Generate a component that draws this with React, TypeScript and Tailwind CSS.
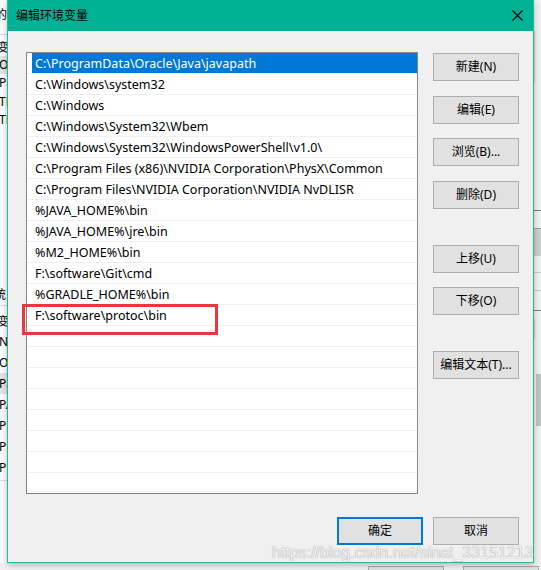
import clsx from "clsx";

const paths = [
  "C:\\ProgramData\\Oracle\\Java\\javapath",
  "C:\\Windows\\system32",
  "C:\\Windows",
  "C:\\Windows\\System32\\Wbem",
  "C:\\Windows\\System32\\WindowsPowerShell\\v1.0\\",
  "C:\\Program Files (x86)\\NVIDIA Corporation\\PhysX\\Common",
  "C:\\Program Files\\NVIDIA Corporation\\NVIDIA NvDLISR",
  "%JAVA_HOME%\\bin",
  "%JAVA_HOME%\\jre\\bin",
  "%M2_HOME%\\bin",
  "F:\\software\\Git\\cmd",
  "%GRADLE_HOME%\\bin",
  "F:\\software\\protoc\\bin",
];

const rows = [...paths, ...Array(8).fill("")];

function Btn({ label, className }: { label: string; className?: string }) {
  return (
    <div
      className={clsx(
        "flex h-[28px] w-[86px] items-center justify-center bg-[#e1e1e1] text-[12px] text-black",
        className ?? "border border-[#adadad]"
      )}
    >
      {label}
    </div>
  );
}

function BackStripLeft() {
  return (
    <div className="flex w-[7px] flex-col overflow-hidden bg-[#fbfbfb] text-[12px] leading-none whitespace-nowrap text-black">
      <div className="h-[35px] border-b border-[#d9d9d9] pt-[9px]">
        <span className="ml-[-5px] block">的</span>
      </div>
      <div className="mt-[5px] flex h-[16px] items-center">
        <span className="ml-[-3px]">变</span>
      </div>
      <div className="flex h-[18px] items-center bg-[#e3e3e3]">
        <span className="ml-[-1px]">OneDrive</span>
      </div>
      <div className="flex h-[18px] items-center"><span className="ml-[-1px]">Path</span></div>
      <div className="flex h-[19px] items-center"><span className="ml-[-1px]">TEMP</span></div>
      <div className="flex h-[18px] items-center"><span className="ml-[-1px]">TMP</span></div>
      <div className="h-[156px] shrink-0" />
      <div className="flex h-[21px] shrink-0 items-center border-b border-[#d9d9d9]">
        <span className="ml-[-6px]">统</span>
      </div>
      <div className="mt-[7px] flex h-[18px] shrink-0 items-center">
        <span className="ml-[-3px]">变</span>
      </div>
      {["NUMBER", "OS", "Path", "PATHEXT", "PROCESSOR", "PROCESSOR", "PROCESSOR"].map((t, i) => (
        <div
          key={i}
          className={clsx("flex h-[21px] shrink-0 items-center", t === "Path" && "bg-[#e3e3e3]")}
        >
          <span className="ml-[-1px]">{t}</span>
        </div>
      ))}
      <div className="mt-[2px] border-t border-[#d9d9d9]" />
    </div>
  );
}

function BackStripRight() {
  return (
    <div className="flex w-[8px] flex-col bg-[#f0f0f0]">
      <div className="mt-[31px] ml-[1px] h-[52px] w-[1px] bg-[#d0d0d0]" />
      <div className="mt-[127px] h-[1px] bg-[#7a7a7a]" />
      <div className="mt-[17px] h-[1px] bg-[#9a9a9a]" />
      <div className="h-[27px] bg-[#cdcdcd]" />
      <div className="mt-[16px] h-[1px] bg-[#c8c8c8]" />
      <div className="mt-[17px] h-[1px] bg-[#c8c8c8]" />
      <div className="mt-[19px] h-[1px] bg-[#7a7a7a]" />
      <div className="mt-[8px] ml-[1px] h-[20px] w-[1px] bg-[#d0d0d0]" />
      <div className="mt-[35px] ml-[3px] h-[52px] w-[5px] bg-[#c2c2c2]" />
    </div>
  );
}

export default function App() {
  return (
    <div className="relative h-[570px] w-[541px] overflow-hidden bg-[#f0f0f0] font-['Noto_Sans','Noto_Sans_CJK_SC',sans-serif]">
      {/* window behind */}
      <div className="flex h-full flex-col">
        <div className="flex flex-1 justify-between overflow-hidden">
          <BackStripLeft />
          <BackStripRight />
        </div>
        <div className="flex h-[7px] gap-[19px] pt-[3px] pl-[368px]">
          <div className="h-[8px] w-[76px] border border-[#adadad] bg-[#e1e1e1]" />
          <div className="h-[8px] w-[76px] border border-[#adadad] bg-[#e1e1e1]" />
        </div>
      </div>

      {/* dialog */}
      <div className="absolute top-0 left-[7px] flex h-[563px] w-[527px] flex-col border-x border-b border-[#1fb99c] bg-[#f0f0f0] shadow-[0_2px_6px_rgba(0,0,0,0.25)]">
        <div className="flex h-[31px] shrink-0 items-center justify-between bg-[#00b294] pr-[10px] pl-[8px]">
          <span className="text-[12px] text-black">编辑环境变量</span>
          <svg width="11" height="11" viewBox="0 0 11 11" className="text-black">
            <path d="M0.5 0.5 L10.5 10.5 M10.5 0.5 L0.5 10.5" stroke="currentColor" strokeWidth="1.1" />
          </svg>
        </div>

        <div className="flex flex-col pt-[21px] pl-[18px]">
          <div className="flex">
            <div className="h-[442px] w-[392px] overflow-hidden border border-[#828790] bg-white">
              {rows.map((p, i) => (
                <div key={i} className="h-[21px] border-b border-[#f0f0f0]">
                  <div
                    className={clsx(
                      "ml-[5px] flex h-[20px] items-center pt-[2px] pl-[3px] text-[12.5px] whitespace-nowrap",
                      i === 0 ? "bg-[#0078d7] text-white" : "text-black"
                    )}
                  >
                    {p}
                  </div>
                </div>
              ))}
            </div>

            <div className="ml-[15px] flex flex-col pt-[1px]">
              <Btn label="新建(N)" />
              <Btn label="编辑(E)" className="mt-[15px] border border-[#adadad]" />
              <Btn label="浏览(B)..." className="mt-[14px] border border-[#adadad]" />
              <Btn label="删除(D)" className="mt-[15px] border border-[#adadad]" />
              <Btn label="上移(U)" className="mt-[36px] border border-[#adadad]" />
              <Btn label="下移(O)" className="mt-[14px] border border-[#adadad]" />
              <Btn label="编辑文本(T)..." className="mt-[36px] border border-[#adadad]" />
            </div>
          </div>

          <div className="mt-[23px] flex justify-end gap-[10px] pr-[14px]">
            <Btn label="确定" className="border-2 border-[#0078d7]" />
            <Btn label="取消" />
          </div>
        </div>
      </div>

      {/* highlight annotation */}
      <div className="absolute top-[304px] left-[22px] h-[31px] w-[196px] border-[3px] border-[#e8383b]" />

      {/* watermark */}
      <div className="absolute top-[541px] left-[272px] font-['Liberation_Sans',sans-serif] text-[16px] text-[#f2f2f2] [text-shadow:0_0_1px_#7a7a7a]">
        https://blog.csdn.net/sinat_33151213
      </div>
    </div>
  );
}
